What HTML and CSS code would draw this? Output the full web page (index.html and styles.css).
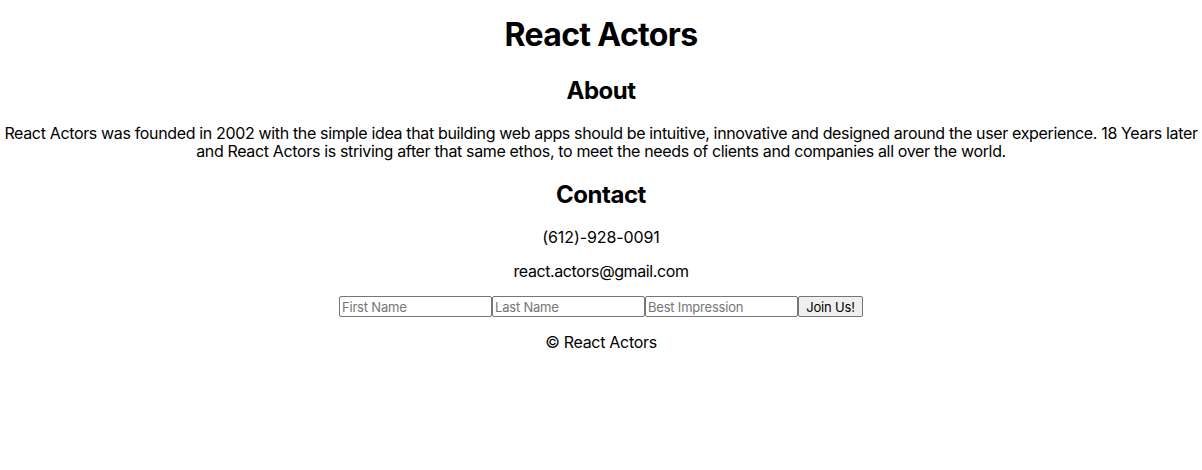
FILE: index.html
```html
<!DOCTYPE html>
<html>
<head>
<meta charset="utf-8">
<title>React Actors</title>
<link rel="stylesheet" href="styles.css">
</head>
<body>
<div class="app">
  <h1 class="title">React Actors</h1>
  <section class="about">
    <h2 class="heading">About</h2>
    <p class="about-text">React Actors was founded in 2002 with the simple idea that building web apps should be intuitive, innovative and designed around the user experience. 18 Years later and React Actors is striving after that same ethos, to meet the needs of clients and companies all over the world.</p>
  </section>
  <section class="contact">
    <h2 class="heading">Contact</h2>
    <p class="line phone">(612)-928-0091</p>
    <p class="line email">react.actors@gmail.com</p>
    <form class="signup">
      <input class="field" type="text" placeholder="First Name"><input class="field" type="text" placeholder="Last Name"><input class="field" type="text" placeholder="Best Impression"><button class="join" type="button">Join Us!</button>
    </form>
  </section>
  <footer class="footer">© React Actors</footer>
</div>
</body>
</html>
```
FILE: styles.css
```css
body {
  margin: 0;
  font-family: Inter, "Liberation Sans", sans-serif;
  color: #000;
  background: #fff;
}
.app {
  text-align: center;
}
.title {
  font-size: 32px;
  line-height: 38px;
  letter-spacing: -0.02em;
  margin: 16px 0 23px;
}
.heading {
  font-size: 24px;
  line-height: 28px;
  letter-spacing: -0.02em;
  margin: 21px 0 19px;
}
.about-text,
.line,
.footer {
  font-size: 16px;
  line-height: 18px;
  margin: 16px 0;
}
.about-text {
  letter-spacing: -0.35px;
}
.phone {
  letter-spacing: -0.1px;
}
.email {
  letter-spacing: -0.4px;
}
.footer {
  letter-spacing: -0.3px;
}
.signup {
  display: flex;
  justify-content: center;
}
.field {
  font-family: Inter, "Liberation Sans", sans-serif;
  font-size: 13px;
  letter-spacing: -0.2px;
  width: 153px;
  box-sizing: border-box;
  height: 21px;
  padding: 1px 2px;
  border: 1px solid #767676;
  border-radius: 2px;
  margin: 0;
  color: #000;
  background: #fff;
}
.field::placeholder {
  color: #757575;
}
.join {
  font-family: Inter, "Liberation Sans", sans-serif;
  font-size: 13px;
  letter-spacing: -0.2px;
  height: 21px;
  width: 65px;
  padding: 1px 6px;
  border: 1px solid #767676;
  border-radius: 2px;
  background: #efefef;
  color: #000;
  margin: 0;
}
```
